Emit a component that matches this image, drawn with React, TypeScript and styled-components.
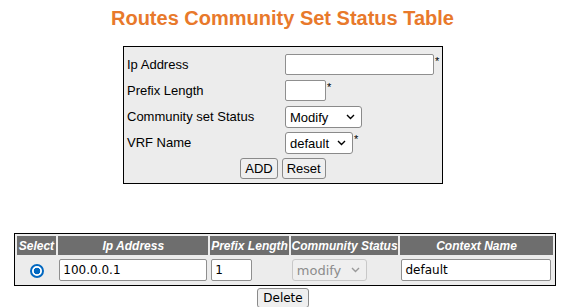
import React from "react";
import styled, { createGlobalStyle } from "styled-components";

const Global = createGlobalStyle`
  html, body { margin: 0; padding: 0; background: #ffffff; }
  body { font-family: "Liberation Sans", Arial, sans-serif; font-size: 13px; color: #000; }
`;

const Page = styled.div`
  width: 564px;
  display: flex;
  flex-direction: column;
  align-items: center;
`;

const Title = styled.h1`
  margin: 6px 0 0 1px;
  font-family: "Liberation Sans", Arial, sans-serif;
  font-size: 20px;
  font-weight: bold;
  color: #e8792b;
  line-height: 24px;
`;

const FormBox = styled.div`
  margin-top: 16px;
  margin-left: 2px;
  width: 318px;
  border: 1px solid #000;
  background: #ececec;
  padding: 7px 0 4px 0;
  display: grid;
  grid-template-columns: 161px auto;
  row-gap: 5px;
`;

const Label = styled.div`
  padding-left: 3px;
  display: flex;
  align-items: center;
  height: 21px;
  font-size: 13px;
`;

const Field = styled.div`
  display: flex;
  align-items: flex-start;
  height: 21px;
`;

const Star = styled.span`
  font-size: 11px;
  line-height: 11px;
  margin-left: 1px;
  margin-top: 2px;
`;

const TextInput = styled.input<{ $w: number }>`
  box-sizing: border-box;
  width: ${(p) => p.$w}px;
  height: 21px;
  border: 1px solid #8f8f8f;
  border-radius: 2px;
  background: #fff;
  padding: 1px 3px;
  font-family: "DejaVu Sans", Verdana, sans-serif;
  font-size: 12px;
  outline: none;
`;

const SelectWrap = styled.div<{ $w: number }>`
  position: relative;
  width: ${(p) => p.$w}px;
  height: 22px;
`;

const Select = styled.select<{ $disabled?: boolean; $font?: string }>`
  appearance: none;
  -webkit-appearance: none;
  box-sizing: border-box;
  width: 100%;
  height: 100%;
  border: 1px solid ${(p) => (p.$disabled ? "#c8c8c8" : "#8a8a8a")};
  border-radius: 3px;
  background: ${(p) => (p.$disabled ? "#efefef" : "#fff")};
  color: ${(p) => (p.$disabled ? "#8c8c8c" : "#000")};
  padding: 0 0 0 4px;
  font-family: ${(p) => p.$font || '"Liberation Sans", Arial, sans-serif'};
  font-size: 13px;
  outline: none;
  opacity: 1;
`;

const Chevron = styled.svg<{ $disabled?: boolean }>`
  position: absolute;
  right: 7px;
  top: 8px;
  width: 9px;
  height: 6px;
  pointer-events: none;
  stroke: ${(p) => (p.$disabled ? "#9a9a9a" : "#000")};
`;

const ButtonRow = styled.div`
  grid-column: 1 / span 2;
  display: flex;
  justify-content: center;
  gap: 4px;
`;

const Button = styled.button`
  height: 21px;
  padding: 0 4px;
  border: 1px solid #8a8a8a;
  border-radius: 3px;
  background: #efefef;
  font-family: "Liberation Sans", Arial, sans-serif;
  font-size: 13px;
  color: #000;
`;

const Table = styled.table`
  margin-top: 49px;
  margin-left: 5px;
  width: 542px;
  border: 1px solid #000;
  border-spacing: 2px;
  background: #ececec;
`;

const Th = styled.th<{ $w: number }>`
  width: ${(p) => p.$w}px;
  background: #6e6e6e;
  color: #fff;
  font-size: 12px;
  font-weight: bold;
  font-style: italic;
  height: 19px;
  padding: 0;
  text-align: center;
`;

const Td = styled.td<{ $align?: string }>`
  padding: 1px 1px;
  height: 24px;
  text-align: ${(p) => p.$align || "left"};
`;

const CellInput = styled.input<{ $w: number }>`
  box-sizing: border-box;
  width: ${(p) => p.$w}px;
  height: 22px;
  border: 1px solid #8f8f8f;
  border-radius: 2px;
  background: #fff;
  padding: 1px 3px;
  font-family: "DejaVu Sans", Verdana, sans-serif;
  font-size: 12px;
  outline: none;
  display: block;
`;

const Radio = styled.input`
  appearance: none;
  -webkit-appearance: none;
  box-sizing: border-box;
  margin: 0 0 0 1px;
  width: 14px;
  height: 14px;
  border-radius: 50%;
  border: 2px solid #0067c0;
  background: radial-gradient(circle, #0067c0 0 3px, #ffffff 3.6px);
  vertical-align: middle;
`;

const DeleteButton = styled(Button)`
  margin-top: 2px;
  margin-left: 2px;
  font-family: "DejaVu Sans", Verdana, sans-serif;
  font-size: 12px;
  height: 20px;
  padding: 0 5px;
`;

const ChevronIcon = ({ disabled }: { disabled?: boolean }) => (
  <Chevron $disabled={disabled} viewBox="0 0 9 6" fill="none" strokeWidth={1.4}>
    <path d="M1 1 L4.5 4.5 L8 1" />
  </Chevron>
);

export default function App() {
  return (
    <>
      <Global />
      <Page>
        <Title>Routes Community Set Status Table</Title>
        <FormBox>
          <Label>Ip Address</Label>
          <Field>
            <TextInput $w={149} defaultValue="" />
            <Star>*</Star>
          </Field>
          <Label>Prefix Length</Label>
          <Field>
            <TextInput $w={41} defaultValue="" />
            <Star>*</Star>
          </Field>
          <Label>Community set Status</Label>
          <Field>
            <SelectWrap $w={77}>
              <Select defaultValue="Modify">
                <option>Modify</option>
              </Select>
              <ChevronIcon />
            </SelectWrap>
          </Field>
          <Label>VRF Name</Label>
          <Field>
            <SelectWrap $w={68}>
              <Select defaultValue="default">
                <option>default</option>
              </Select>
              <ChevronIcon />
            </SelectWrap>
            <Star>*</Star>
          </Field>
          <ButtonRow>
            <Button>ADD</Button>
            <Button>Reset</Button>
          </ButtonRow>
        </FormBox>
        <Table>
          <thead>
            <tr>
              <Th $w={40}>Select</Th>
              <Th $w={149}>Ip Address</Th>
              <Th $w={80}>Prefix Length</Th>
              <Th $w={109}>Community Status</Th>
              <Th $w={152}>Context Name</Th>
            </tr>
          </thead>
          <tbody>
            <tr>
              <Td $align="center">
                <Radio type="radio" defaultChecked name="sel" />
              </Td>
              <Td>
                <CellInput $w={148} defaultValue="100.0.0.1" />
              </Td>
              <Td>
                <CellInput $w={41} defaultValue="1" />
              </Td>
              <Td>
                <SelectWrap $w={75}>
                  <Select $disabled disabled defaultValue="modify" $font='"DejaVu Sans", Verdana, sans-serif'>
                    <option>modify</option>
                  </Select>
                  <ChevronIcon disabled />
                </SelectWrap>
              </Td>
              <Td>
                <CellInput $w={150} defaultValue="default" />
              </Td>
            </tr>
          </tbody>
        </Table>
        <DeleteButton>Delete</DeleteButton>
      </Page>
    </>
  );
}
